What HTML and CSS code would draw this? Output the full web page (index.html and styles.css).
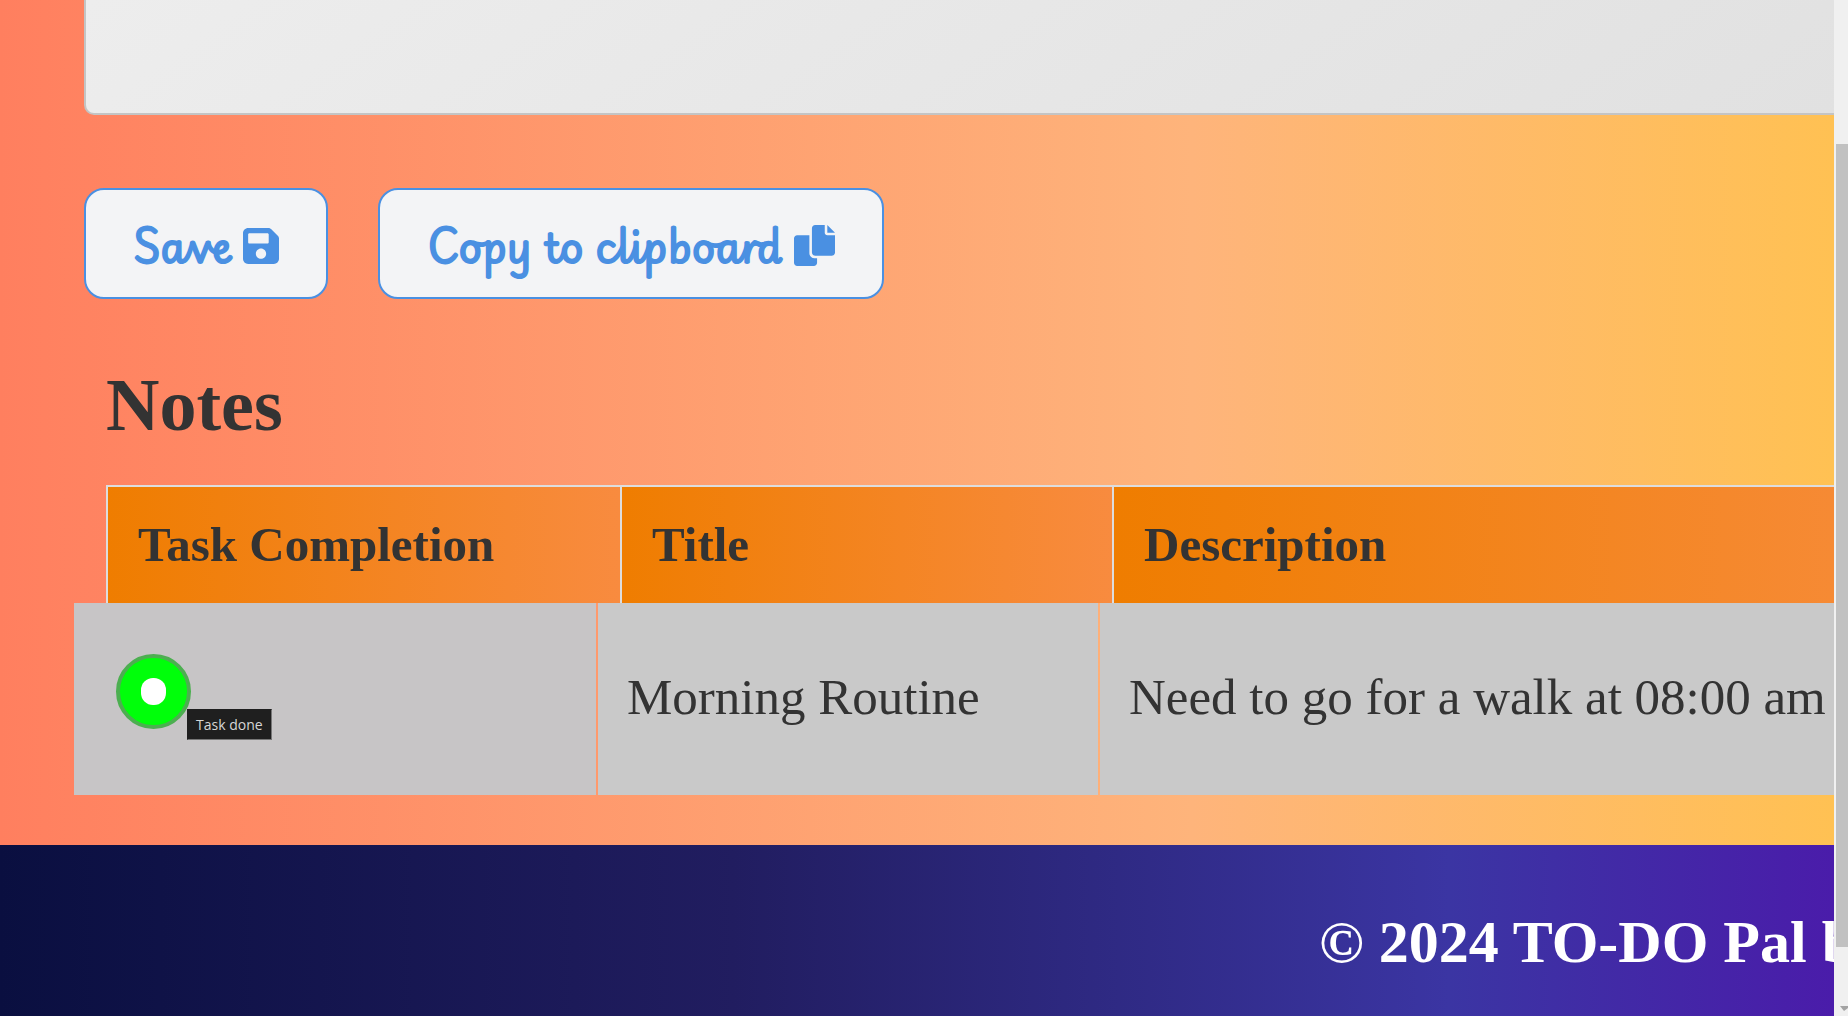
FILE: index.html
```html
<!DOCTYPE html>
<html lang="en">
<head>
<meta charset="utf-8">
<title>TO-DO Pal</title>
<link rel="stylesheet" href="styles.css">
</head>
<body>
<div class="page">
  <main class="content">
    <form class="editor">
      <textarea class="note-input" aria-label="Note"></textarea>
      <div class="actions">
        <button class="btn" type="button">Save
          <svg class="icon-save" viewBox="0 32 448 448" aria-hidden="true"><path fill-rule="evenodd" d="M433.1 129.1l-83.900-83.900C342.300 38.320 327.100 32 316.100 32H64C28.650 32 0 60.650 0 96v320c0 35.350 28.650 64 64 64h320c35.350 0 64-28.650 64-64V163.900C448 152.900 441.700 137.700 433.100 129.100zM224 416c-35.340 0-64-28.660-64-64s28.660-64 64-64s64 28.660 64 64S259.300 416 224 416zM320 208C320 216.800 312.800 224 304 224h-224C71.160 224 64 216.800 64 208v-96C64 103.200 71.160 96 80 96h224C312.800 96 320 103.200 320 112V208z"/></svg>
        </button>
        <button class="btn" type="button">Copy to clipboard
          <svg class="icon-copy" viewBox="0 0 512 512" aria-hidden="true"><path d="M384 96V0H264c-22 0-40 18-40 40v304c0 22 18 40 40 40h208c22 0 40-18 40-40V128h-96c-17.600 0-32-14.400-32-32zM416 0v96h96L416 0zM192 352V128H40c-22 0-40 18-40 40v304c0 22 18 40 40 40h208c22 0 40-18 40-40v-56h-32c-35.300 0-64-28.700-64-64z"/></svg>
        </button>
      </div>
    </form>
    <section class="notes">
      <h2 class="notes-title">Notes</h2>
      <table class="notes-table">
        <thead>
          <tr class="head-row"><th>Task Completion</th><th>Title</th><th>Description</th></tr>
        </thead>
        <tbody>
          <tr class="note-row">
            <td class="done-cell">
              <input class="done" type="checkbox" id="done-1" aria-label="Task done">
              <span class="tooltip">Task done</span>
            </td>
            <td>Morning Routine</td>
            <td>Need to go for a walk at 08:00 am</td>
          </tr>
        </tbody>
      </table>
    </section>
  </main>
  <footer class="footer">© 2024 TO-DO Pal by</footer>
</div>
<div class="scrollbar" aria-hidden="true">
  <div class="thumb"></div>
  <div class="arrow"></div>
</div>
</body>
</html>
```

FILE: styles.css
```css
* { box-sizing: border-box; }

body {
  margin: 0;
  height: 100vh;
  display: grid;
  grid-template-columns: minmax(0, 1fr) 14px;
  overflow: hidden;
  font-family: "Times New Roman", "Liberation Serif", serif;
  color: #333;
}

.page {
  display: flex;
  flex-direction: column;
  height: 100vh;
  overflow: hidden;
  background: linear-gradient(to right, #ff7f5f 0%, #feb47b 65%, #ffc153 100%);
}

.content { flex: none; padding-bottom: 50px; }

.editor { display: block; padding-left: 84px; }

.note-input {
  display: block;
  width: 100%;
  height: 115px;
  border: 2px solid #c4c4c4;
  border-width: 0 0 2px 2px;
  border-radius: 0 0 0 10px;
  background: linear-gradient(145deg, #ededed, #e1e1e1);
  resize: none;
}

.actions { display: flex; gap: 50px; margin-top: 73px; }

.btn {
  display: flex;
  align-items: center;
  gap: 12px;
  height: 111px;
  padding: 0 47px;
  border: 2px solid #4a90e2;
  border-radius: 20px;
  background: #f3f4f6;
  color: #4a90e2;
  font: 600 40px/60px "Playwrite GB S", Lato, sans-serif;
  -webkit-text-stroke: 2px #4a90e2;
  white-space: nowrap;
}

.btn svg { fill: currentColor; flex: none; margin-top: 4px; }
.icon-save { width: 36px; height: 36px; }
.icon-copy { width: 41px; height: 41px; }

.notes { padding-left: 106px; }

.notes-title {
  margin: 64px 0 38px;
  font-size: 74px;
  line-height: 84px;
}

.notes-table { display: block; }
.notes-table thead, .notes-table tbody { display: block; }
.head-row, .note-row { display: grid; }

.head-row { grid-template-columns: 514px 492px minmax(0, 1fr); height: 118px; }

.head-row th {
  display: flex;
  align-items: center;
  padding: 0 0 2px 30px;
  border: 2px solid #ddd;
  border-width: 2px 0 0 2px;
  background: linear-gradient(to right, #ef7d00, #f88b3f);
  font-size: 49px;
  white-space: nowrap;
}

.head-row th:last-child { background: linear-gradient(to right, #ef7d00, #f68a34); }

.note-row {
  grid-template-columns: 522px 500px minmax(0, 1fr);
  column-gap: 2px;
  height: 192px;
  margin-left: -32px;
}

.note-row td {
  display: flex;
  align-items: center;
  padding: 0 0 4px 29px;
  background: #c9c9c9;
  font-size: 51px;
  white-space: nowrap;
}

.note-row .done-cell { position: relative; padding: 0 0 16px 42px; background: #c7c5c6; }

.done {
  appearance: none;
  display: grid;
  place-items: center;
  width: 75px;
  height: 75px;
  margin: 0;
  border: 4px solid #4caf50;
  border-radius: 50%;
  background: #00ff0a;
}

.done::before { content: ""; width: 25px; height: 27px; border-radius: 12px; background: #fff; }

.tooltip {
  position: absolute;
  left: 113px;
  top: 106px;
  padding: 0 8px;
  border: 1px solid #1f1f1f;
  border-right-color: #777;
  border-bottom-color: #777;
  background: #1f1f1f;
  color: #d6d6d6;
  font: 14px/29px "Segoe UI", "Open Sans", sans-serif;
}

.footer {
  flex: 1;
  padding: 63px 0 0 1319px;
  background: linear-gradient(to right, #0a0f40 0%, #211d60 40%, #3b35a3 79%, #4a1caa 100%);
  color: #fff;
  font-size: 60px;
  font-weight: bold;
  line-height: 68px;
  white-space: nowrap;
  overflow: hidden;
}

.scrollbar {
  display: flex;
  flex-direction: column;
  align-items: flex-end;
  height: 100vh;
  padding-top: 144px;
  background: #f0f0f0;
}

.thumb { width: 12px; flex: 1; background: #c1c1c1; }

.arrow {
  width: 8px;
  height: 69px;
  background: linear-gradient(#a3a3a3, #a3a3a3) 0 59px / 8px 5px no-repeat;
  clip-path: polygon(0 59px, 8px 59px, 8px 61px, 4px 64px);
}
```
